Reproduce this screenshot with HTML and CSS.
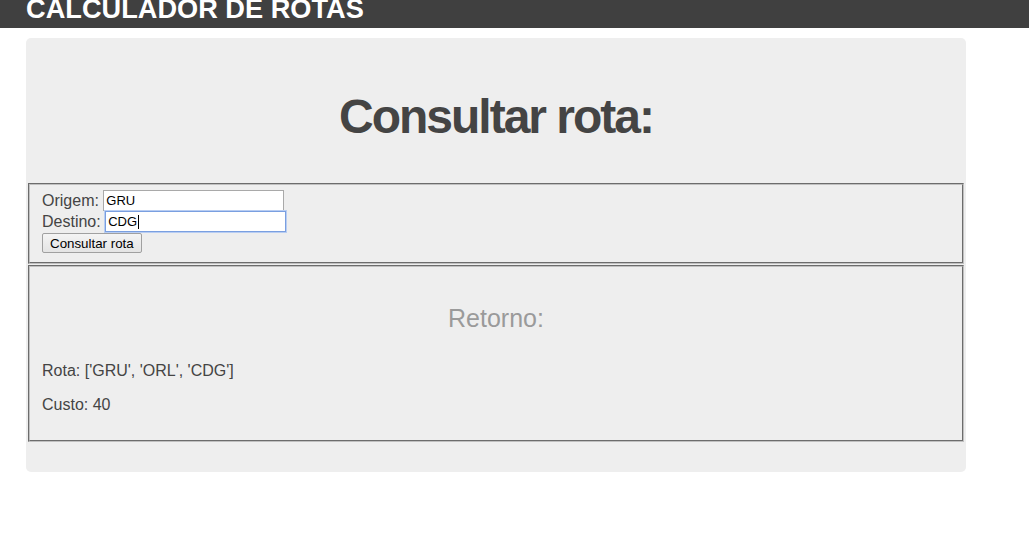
FILE: index.html
```html
<!DOCTYPE html>
<html lang="pt">
<head>
<meta charset="utf-8">
<title>Calculador de Rotas</title>
<link rel="stylesheet" href="styles.css">
</head>
<body>
<header class="topbar">
  <h1 class="brand">CALCULADOR DE ROTAS</h1>
</header>
<main class="panel">
  <h2 class="title">Consultar rota:</h2>
  <fieldset class="box box-form">
    <label class="lbl">Origem:</label> <input class="field" type="text" value="GRU"><br>
    <label class="lbl">Destino:</label> <input class="field field-focus" type="text" value="CDG"><br>
    <button class="btn" type="button">Consultar rota</button>
  </fieldset>
  <fieldset class="box box-result">
    <h3 class="subtitle">Retorno:</h3>
    <p class="line">Rota: ['GRU', 'ORL', 'CDG']</p>
    <p class="line">Custo: 40</p>
  </fieldset>
</main>
</body>
</html>
```

FILE: styles.css
```css
html, body {
  margin: 0;
  padding: 0;
  background: #ffffff;
  font-family: "Liberation Sans", Arial, sans-serif;
}

.topbar {
  height: 28px;
  background: #404040;
  padding-left: 26px;
  overflow: hidden;
}

.brand {
  margin: 0;
  font-size: 27.2px;
  line-height: 17px;
  font-weight: bold;
  color: #ffffff;
}

.panel {
  width: 940px;
  margin: 10px 0 0 26px;
  padding: 51px 0 30px;
  background: #eeeeee;
  border-radius: 5px;
  box-sizing: border-box;
}

.title {
  margin: 0 0 39px;
  text-align: center;
  font-size: 48px;
  line-height: 55px;
  letter-spacing: -2px;
  font-weight: bold;
  color: #444444;
}

.box {
  margin: 0 2px;
  padding: 5px 12px 10px;
  border: 2px groove #c0c0c0;
  font-size: 16px;
  color: #444444;
}

.box-form {
  line-height: 21px;
  padding-bottom: 9px;
}

.lbl {
  color: #444444;
}

.field {
  width: 181px;
  height: 21px;
  box-sizing: border-box;
  margin: 0;
  padding: 1px 2px;
  border: 1px solid #a9a9a9;
  background: #ffffff;
  font-family: "Liberation Sans", Arial, sans-serif;
  font-size: 13px;
  color: #000000;
  vertical-align: bottom;
}

.field-focus {
  border: 1px solid #7a9fe0;
  box-shadow: 0 0 0 1px #b8cdf2;
  background: #ffffff linear-gradient(#000000, #000000) no-repeat 32px 3px / 1px 14px;
}

.btn {
  margin: 1px 0 0;
  height: 20px;
  padding: 0 7px;
  border: 1px solid #a0a0a0;
  border-radius: 2px;
  background: linear-gradient(#f4f4f4, #e4e4e4);
  font-family: "Liberation Sans", Arial, sans-serif;
  font-size: 13.33px;
  color: #000000;
  vertical-align: bottom;
}

.box-result {
  margin-top: 1px;
  padding-bottom: 10px;
}

.subtitle {
  margin: 33px 0 30px;
  text-align: center;
  font-size: 25px;
  line-height: 27px;
  font-weight: normal;
  color: #9a9a9a;
}

.line {
  margin: 16px 0;
  line-height: 18px;
  color: #444444;
}
```
